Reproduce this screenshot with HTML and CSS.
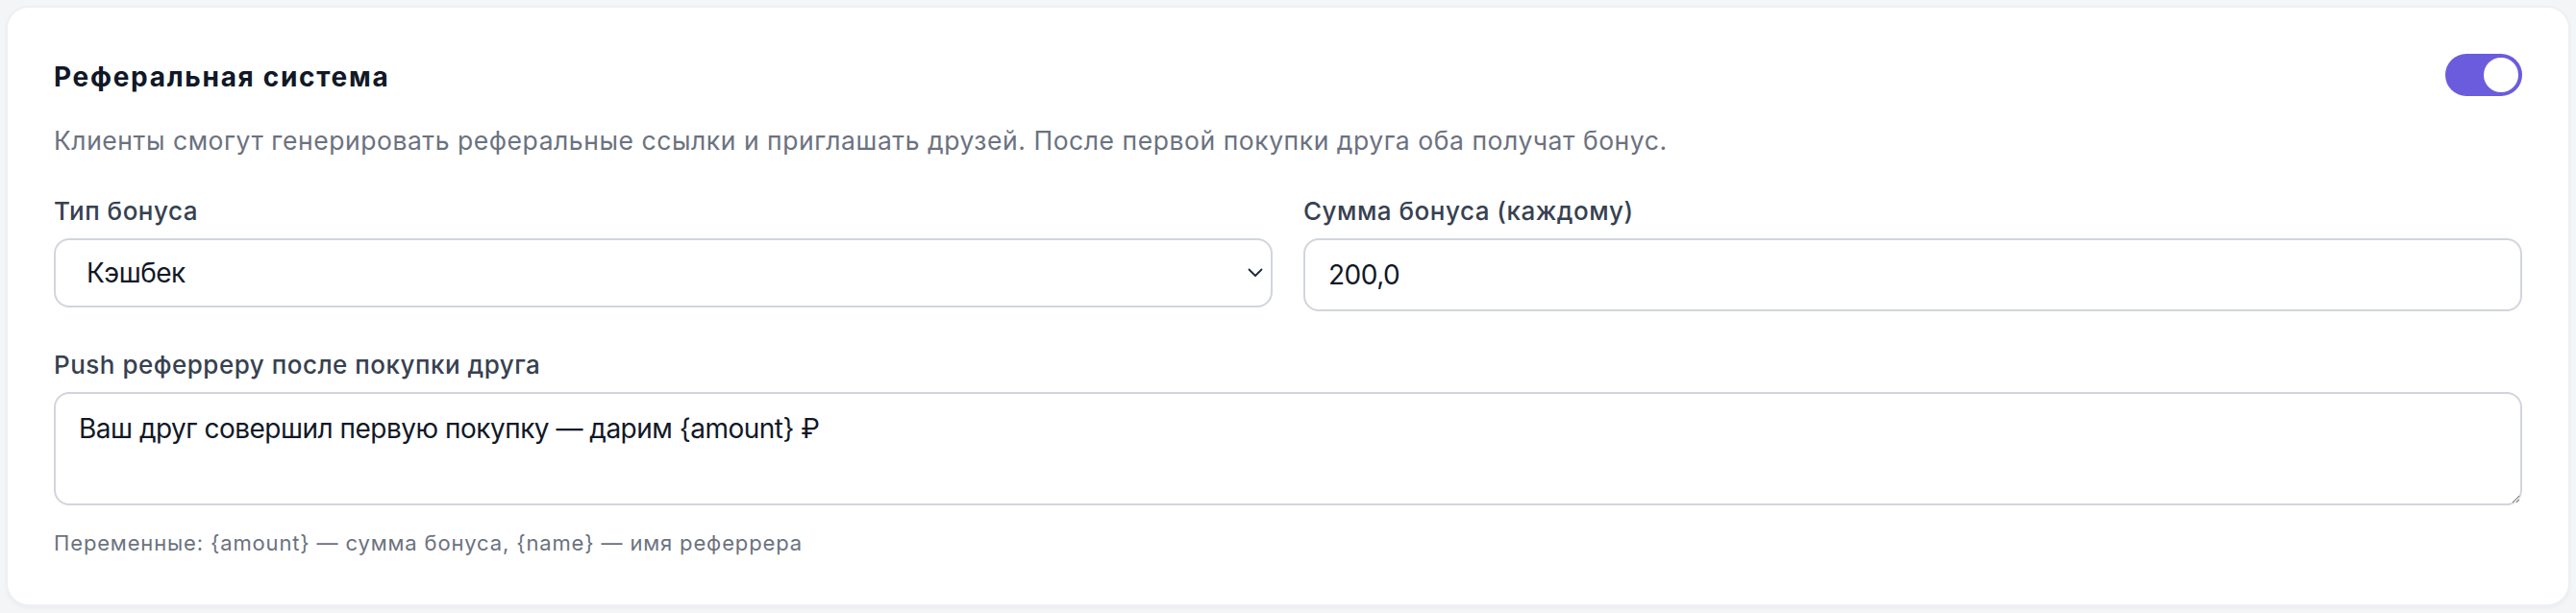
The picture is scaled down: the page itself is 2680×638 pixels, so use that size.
FILE: index.html
```html
<!DOCTYPE html>
<html lang="ru">
<head>
<meta charset="utf-8">
<title>Реферальная система</title>
<link rel="stylesheet" href="styles.css">
</head>
<body>
<section class="card">
  <div class="card-head">
    <h2 class="title">Реферальная система</h2>
    <span class="toggle" role="switch" aria-checked="true"><span class="knob"></span></span>
  </div>
  <p class="desc">Клиенты смогут генерировать реферальные ссылки и приглашать друзей. После первой покупки друга оба получат бонус.</p>
  <div class="grid">
    <div class="field">
      <label class="label">Тип бонуса</label>
      <div class="select-wrap">
        <select class="select">
          <option>Кэшбек</option>
        </select>
        <svg class="chev" width="16" height="10" viewBox="0 0 16 10"><path d="M1.5 1.5 L8 8 L14.5 1.5" fill="none" stroke="#1f2937" stroke-width="1.8" stroke-linecap="round" stroke-linejoin="round"/></svg>
      </div>
    </div>
    <div class="field">
      <label class="label">Сумма бонуса (каждому)</label>
      <input class="input" type="text" value="200,0">
    </div>
  </div>
  <div class="field">
    <label class="label">Push реферреру после покупки друга</label>
    <textarea class="textarea" rows="2">Ваш друг совершил первую покупку — дарим {amount} ₽</textarea>
  </div>
  <p class="help">Переменные: {amount} — сумма бонуса, {name} — имя реферрера</p>
</section>
</body>
</html>
```

FILE: styles.css
```css
* { box-sizing: border-box; }
html, body { margin: 0; }
body {
  background: #f4f5f7;
  padding: 6px 6px 5px;
  font-family: Inter, "Noto Sans", sans-serif;
}
.card {
  background: #fff;
  border: 2px solid #eef0f3;
  border-radius: 24px;
  box-shadow: 0 2px 4px rgba(16, 24, 40, 0.04);
  padding: 48px 48px 48px;
}
.card-head {
  display: flex;
  align-items: center;
  justify-content: space-between;
  height: 44px;
}
.title {
  margin: 4px 0 0;
  font-size: 28px;
  line-height: 40px;
  font-weight: 700;
  letter-spacing: 1.7px;
  color: #111827;
}
.toggle {
  width: 80px;
  height: 44px;
  border-radius: 22px;
  background: #6a5cdc;
  display: flex;
  align-items: center;
  justify-content: flex-end;
  padding: 4px;
}
.knob {
  width: 36px;
  height: 36px;
  border-radius: 50%;
  background: #fff;
}
.desc {
  margin: 26px 0 34px;
  font-size: 26.5px;
  line-height: 40px;
  letter-spacing: 0.55px;
  color: #6b7280;
}
.grid {
  display: grid;
  grid-template-columns: 1fr 1fr;
  gap: 32px;
  margin-bottom: 36px;
}
.field {
  display: flex;
  flex-direction: column;
  gap: 8px;
}
.label {
  font-size: 26px;
  line-height: 40px;
  font-weight: 500;
  letter-spacing: 0.5px;
  color: #374151;
}
.select-wrap { position: relative; }
.select {
  appearance: none;
  -webkit-appearance: none;
  width: 100%;
  height: 72px;
  border: 2px solid #d1d5db;
  border-radius: 16px;
  background: #fff;
  padding: 0 60px 0 32px;
  font-family: inherit;
  font-size: 28px;
  letter-spacing: -0.5px;
  color: #111827;
}
.chev {
  position: absolute;
  right: 10px;
  top: 31px;
}
.input {
  width: 100%;
  height: 76px;
  border: 2px solid #d1d5db;
  border-radius: 16px;
  padding: 16px 24px;
  font-family: inherit;
  font-size: 28px;
  line-height: 40px;
  letter-spacing: -0.5px;
  color: #111827;
  background: #fff;
}
.textarea {
  width: 100%;
  height: 118px;
  border: 2px solid #d1d5db;
  border-radius: 16px;
  padding: 16px 24px;
  font-family: inherit;
  font-size: 28px;
  line-height: 40px;
  letter-spacing: -0.5px;
  color: #111827;
  resize: vertical;
  display: block;
}
.help {
  margin: 23px 0 0;
  font-size: 22px;
  line-height: 32px;
  letter-spacing: 0.85px;
  color: #6b7280;
}
```
